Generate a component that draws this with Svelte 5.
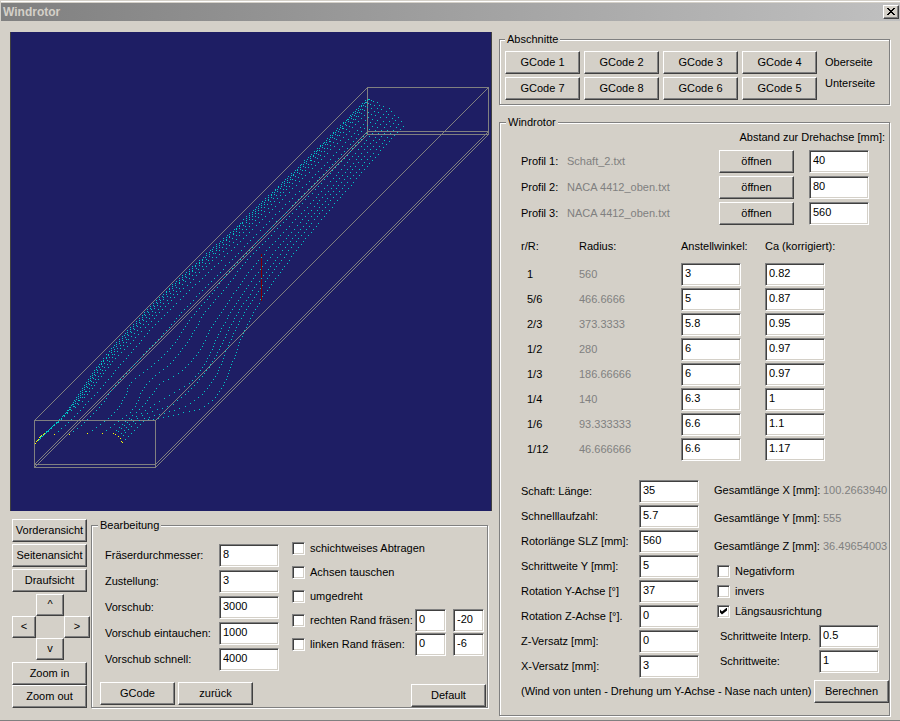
<script lang="ts">
  type Point = [number, number];

  let machining = $state([
    { id: 'fraeser', label: 'Fräserdurchmesser:', value: '8' },
    { id: 'zustellung', label: 'Zustellung:', value: '3' },
    { id: 'vorschub', label: 'Vorschub:', value: '3000' },
    { id: 'eintauchen', label: 'Vorschub eintauchen:', value: '1000' },
    { id: 'schnell', label: 'Vorschub schnell:', value: '4000' }
  ]);

  let options = $state([
    { label: 'schichtweises Abtragen', checked: false, values: [] },
    { label: 'Achsen tauschen', checked: false, values: [] },
    { label: 'umgedreht', checked: false, values: [] },
    { label: 'rechten Rand fräsen:', checked: false, values: ['0', '-20'] },
    { label: 'linken Rand fräsen:', checked: false, values: ['0', '-6'] }
  ]);

  let profiles = $state([
    { file: 'Schaft_2.txt', distance: '40' },
    { file: 'NACA 4412_oben.txt', distance: '80' },
    { file: 'NACA 4412_oben.txt', distance: '560' }
  ]);

  let stations = $state([
    { ratio: '1', radius: '560', angle: '3', ca: '0.82' },
    { ratio: '5/6', radius: '466.6666', angle: '5', ca: '0.87' },
    { ratio: '2/3', radius: '373.3333', angle: '5.8', ca: '0.95' },
    { ratio: '1/2', radius: '280', angle: '6', ca: '0.97' },
    { ratio: '1/3', radius: '186.66666', angle: '6', ca: '0.97' },
    { ratio: '1/4', radius: '140', angle: '6.3', ca: '1' },
    { ratio: '1/6', radius: '93.333333', angle: '6.6', ca: '1.1' },
    { ratio: '1/12', radius: '46.666666', angle: '6.6', ca: '1.17' }
  ]);

  let rotor = $state([
    { id: 'schaft', label: 'Schaft: Länge:', value: '35' },
    { id: 'slz', label: 'Schnelllaufzahl:', value: '5.7' },
    { id: 'laenge', label: 'Rotorlänge SLZ [mm]:', value: '560' },
    { id: 'schritt-y', label: 'Schrittweite Y [mm]:', value: '5' },
    { id: 'rot-y', label: 'Rotation Y-Achse [°]', value: '37' },
    { id: 'rot-z', label: 'Rotation Z-Achse [°].', value: '0' },
    { id: 'z-versatz', label: 'Z-Versatz [mm]:', value: '0' },
    { id: 'x-versatz', label: 'X-Versatz [mm]:', value: '3' }
  ]);

  const totals = [
    { label: 'Gesamtlänge X [mm]:', value: '100.2663940' },
    { label: 'Gesamtlänge Y [mm]:', value: '555' },
    { label: 'Gesamtlänge Z [mm]:', value: '36.49654003' }
  ];

  let flags = $state([
    { label: 'Negativform', checked: false },
    { label: 'invers', checked: false },
    { label: 'Längsausrichtung', checked: true }
  ]);

  let steps = $state([
    { id: 'interp', label: 'Schrittweite Interp.', value: '0.5' },
    { id: 'schrittweite', label: 'Schrittweite:', value: '1' }
  ]);

  const sections = [1, 2, 3, 4, 7, 8, 6, 5];

  // blade surface lines, each from the shaft to the tip
  const leading: Point[] = [[35, 443], [44, 433], [60, 418], [75, 399], [92, 373], [103, 358], [122, 336], [137, 320], [157, 299], [190, 268], [232, 230], [260, 203], [311, 154], [368, 97]];
  const upper: Point[] = [[44, 434], [52, 427], [66, 414], [83, 399], [103, 373], [115, 358], [136, 336], [152, 320], [172, 299], [204, 268], [245, 230], [272, 203], [321, 154], [376, 98]];
  const lines: Point[][] = [
    ...[0, 0.12, 0.25, 0.42, 0.68, 1].map((t) =>
      leading.map((p, i): Point => [p[0] + (upper[i][0] - p[0]) * t, p[1] + (upper[i][1] - p[1]) * t])
    ),
    [[54, 434], [70, 420], [86, 403], [104, 384], [128, 355], [156, 323], [180, 299], [212, 268], [240, 241], [326, 154], [379, 100]],
    [[69, 434], [85, 421], [100, 405], [113, 388], [133, 365], [160, 337], [181, 312], [203, 289], [249, 241], [327, 162], [382, 102]],
    [[87, 433], [100, 424], [115, 411], [125, 395], [130, 383], [150, 367], [172, 345], [189, 320], [209, 296], [230, 270], [257, 241], [328, 168], [385, 104]],
    [[102, 433], [118, 421], [133, 408], [141, 392], [150, 380], [170, 363], [188, 340], [204, 313], [223, 290], [245, 262], [265, 241], [329, 174], [389, 107]],
    [[113, 433], [125, 421], [141, 407], [153, 392], [162, 382], [182, 370], [199, 350], [211, 327], [229, 300], [250, 270], [275, 241], [331, 180], [392, 110]],
    [[115, 434], [128, 421], [145, 410], [160, 400], [178, 389], [194, 378], [208, 357], [219, 332], [233, 308], [254, 277], [283, 241], [334, 184], [395, 114]],
    [[118, 436], [134, 420], [152, 411], [168, 406], [184, 395], [202, 376], [214, 358], [226, 334], [240, 308], [262, 277], [290, 241], [335, 189], [398, 117]],
    [[120, 438], [137, 421], [156, 415], [176, 409], [193, 401], [207, 388], [218, 370], [225, 352], [235, 330], [247, 307], [262, 285], [296, 241], [337, 193], [402, 120]],
    [[122, 442], [125, 439], [143, 421], [152, 419], [162, 417], [177, 414], [189, 411], [200, 408], [211, 401], [220, 390], [226, 378], [232, 362], [240, 340], [250, 318], [262, 297], [280, 272], [303, 241], [340, 197], [378, 153], [405, 123]]
  ];

  const rootDots: Point[] = [[35, 443], [36, 441], [37, 440], [38, 439], [39, 437], [40, 436], [41, 435], [43, 434], [44, 433], [54, 434], [69, 434], [87, 433], [102, 433], [113, 433], [115, 434], [118, 436], [120, 438], [121, 441], [122, 442]];

  function spline(a: number, b: number, c: number, d: number, t: number) {
    return 0.5 * (2 * b + (c - a) * t + (2 * a - 5 * b + 4 * c - d) * t * t + (3 * b - a - 3 * c + d) * t * t * t);
  }

  function dotsAlong(line: Point[]) {
    const dots: Point[] = [];
    let last = line[0];
    for (let i = 0; i < line.length - 1; i++) {
      const before = line[Math.max(0, i - 1)];
      const after = line[Math.min(line.length - 1, i + 2)];
      for (let n = 1; n <= 200; n++) {
        const x = spline(before[0], line[i][0], line[i + 1][0], after[0], n / 200);
        const y = spline(before[1], line[i][1], line[i + 1][1], after[1], n / 200);
        // one dot per 3px step of the longer axis, a wider step where the blade turns
        if (last[1] - y >= 3 || x - last[0] >= 5) {
          last = [x, y];
          dots.push(last);
        }
      }
    }
    return dots;
  }

  function dotPath(dots: Point[]) {
    return dots.map(([x, y]) => `M${Math.round(x)} ${Math.round(y)}h1v1h-1z`).join('');
  }

  const surface = dotPath(lines.flatMap(dotsAlong));
  const root = dotPath(rootDots);
</script>

<main class="window">
  <header class="titlebar">
    <h1>Windrotor</h1>
    <button class="close" aria-label="Schließen">
      <svg viewBox="0 0 8 7" width="8" height="7" shape-rendering="crispEdges">
        <path d="M0 0h2v1h1v1h2v-1h1v-1h2v1h-1v1h-1v1h-1v1h1v1h1v1h1v1h-2v-1h-1v-1h-2v1h-1v1h-2v-1h1v-1h1v-1h1v-1h-1v-1h-1v-1h-1z" />
      </svg>
    </button>
  </header>

  <div class="client">
    <div class="left">
      <svg class="view" viewBox="10 32 481 479" shape-rendering="crispEdges">
        <g class="box">
          <path d="M34.5 420.5h121v47h-121zM34.5 464.5h121M367.5 87.5h121v47h-121zM367.5 131.5h121" />
          <path d="M34.5 420.5l333 -333M155.5 420.5l333 -333M34.5 464.5l333 -333M34.5 467.5l333 -333M155.5 464.5l333 -333M155.5 467.5l333 -333" />
        </g>
        <path class="axis" d="M261.5 254v47" />
        <path class="surface" d={surface} />
        <path class="root" d={root} />
      </svg>

      <div class="tools">
        <div class="views">
          <button>Vorderansicht</button>
          <button>Seitenansicht</button>
          <button>Draufsicht</button>
          <div class="arrows">
            <button class="up">^</button>
            <button class="back">&lt;</button>
            <button class="forward">&gt;</button>
            <button class="down">v</button>
          </div>
          <div class="zoom">
            <button>Zoom in</button>
            <button>Zoom out</button>
          </div>
        </div>

        <fieldset class="machining">
          <legend>Bearbeitung</legend>
          <div class="columns">
            <div class="params">
              {#each machining as item}
                <label for={item.id}>{item.label}</label>
                <input id={item.id} type="text" bind:value={item.value} />
              {/each}
            </div>
            <div class="options">
              {#each options as option}
                <div class="option">
                  <label class="check"><input type="checkbox" bind:checked={option.checked} />{option.label}</label>
                  {#each option.values as _, i}
                    <input type="text" aria-label={`${option.label} ${i + 1}`} bind:value={option.values[i]} />
                  {/each}
                </div>
              {/each}
            </div>
          </div>
          <div class="actions">
            <button>GCode</button>
            <button>zurück</button>
            <button class="default">Default</button>
          </div>
        </fieldset>
      </div>
    </div>

    <div class="right">
      <fieldset class="sections">
        <legend>Abschnitte</legend>
        <div class="section-buttons">
          {#each sections as section}
            <button>GCode {section}</button>
          {/each}
        </div>
        <div class="sides">
          <span>Oberseite</span>
          <span>Unterseite</span>
        </div>
      </fieldset>

      <fieldset class="rotor">
        <legend>Windrotor</legend>
        <p class="distance">Abstand zur Drehachse [mm]:</p>
        <div class="profiles">
          {#each profiles as profile, i}
            <label for={`profil-${i}`}>Profil {i + 1}:</label>
            <span class="muted">{profile.file}</span>
            <button>öffnen</button>
            <input id={`profil-${i}`} type="text" bind:value={profile.distance} />
          {/each}
        </div>

        <table>
          <thead>
            <tr>
              <th class="ratio">r/R:</th>
              <th class="radius">Radius:</th>
              <th class="angle">Anstellwinkel:</th>
              <th>Ca (korrigiert):</th>
            </tr>
          </thead>
          <tbody>
            {#each stations as station}
              <tr>
                <td class="ratio">{station.ratio}</td>
                <td class="muted">{station.radius}</td>
                <td><input type="text" aria-label={`Anstellwinkel ${station.ratio}`} bind:value={station.angle} /></td>
                <td><input type="text" aria-label={`Ca ${station.ratio}`} bind:value={station.ca} /></td>
              </tr>
            {/each}
          </tbody>
        </table>

        <div class="settings">
          <div class="lengths">
            {#each rotor as item}
              <label for={item.id}>{item.label}</label>
              <input id={item.id} type="text" bind:value={item.value} />
            {/each}
          </div>
          <div class="extras">
            <div class="totals">
              {#each totals as total}
                <span>{total.label}</span>
                <span class="muted">{total.value}</span>
              {/each}
            </div>
            <div class="flags">
              {#each flags as flag}
                <label class="check"><input type="checkbox" bind:checked={flag.checked} />{flag.label}</label>
              {/each}
            </div>
            <div class="steps">
              {#each steps as step}
                <label for={step.id}>{step.label}</label>
                <input id={step.id} type="text" bind:value={step.value} />
              {/each}
            </div>
          </div>
        </div>

        <div class="footer">
          <span>(Wind von unten - Drehung um Y-Achse - Nase nach unten)</span>
          <button>Berechnen</button>
        </div>
      </fieldset>
    </div>
  </div>
</main>

<style>
  :global(body) {
    background: #d4d0c8;
  }

  .window {
    box-sizing: border-box;
    min-width: 900px;
    padding-top: 3px;
    border-bottom: 1px solid #808080;
    background: #d4d0c8;
    color: #000;
    font-family: 'Liberation Sans', Arial, sans-serif;
    font-size: 11px;
    line-height: 15px;
  }

  .titlebar {
    display: flex;
    align-items: center;
    justify-content: space-between;
    height: 18px;
    margin-left: 1px;
    padding: 0 1px 0 2px;
    background: linear-gradient(to right, #808080, #c0c0c0);
    box-shadow: 0 -1px #d4d0c8, 0 -2px #fff;
  }

  h1 {
    margin: 0;
    color: #d4d0c8;
    font-size: 12px;
    font-weight: 700;
  }

  button {
    box-sizing: border-box;
    width: 75px;
    height: 23px;
    padding: 0 0 1px;
    border: 1px solid;
    border-color: #fff #404040 #404040 #fff;
    border-radius: 0;
    background: #d4d0c8;
    box-shadow: inset -1px -1px #808080;
    color: #000;
    font: inherit;
    white-space: nowrap;
  }

  .close {
    display: grid;
    place-items: center;
    width: 16px;
    height: 14px;
  }

  input[type='text'] {
    box-sizing: border-box;
    width: 60px;
    height: 23px;
    margin: 0;
    padding: 1px 3px 4px;
    border: 1px solid;
    border-color: #808080 #fff #fff #808080;
    border-radius: 0;
    background: #fff;
    box-shadow: inset 1px 1px #404040, inset -1px -1px #d4d0c8;
    color: #000;
    font: inherit;
    outline: 0;
  }

  input[type='checkbox'] {
    appearance: none;
    flex: none;
    box-sizing: border-box;
    width: 13px;
    height: 13px;
    margin: 0;
    border: 1px solid;
    border-color: #808080 #fff #fff #808080;
    background: #fff;
    box-shadow: inset 1px 1px #404040, inset -1px -1px #d4d0c8;
  }

  input[type='checkbox']:checked::before {
    content: '';
    display: block;
    width: 7px;
    height: 7px;
    margin: 2px;
    background: #000;
    clip-path: polygon(0 28%, 28% 58%, 100% 0, 100% 42%, 28% 100%, 0 72%);
  }

  fieldset {
    min-width: 0;
    margin: 0;
    border: 1px solid #808080;
    box-shadow: inset 1px 1px #fff, 1px 1px #fff;
  }

  legend {
    padding: 0 2px;
    background: #d4d0c8;
  }

  label,
  span {
    white-space: nowrap;
  }

  .muted {
    color: #808080;
  }

  .check {
    display: flex;
    align-items: center;
    gap: 5px;
  }

  .client {
    display: grid;
    grid-template-columns: minmax(0, 1fr) 391px;
    gap: 8px;
    padding: 11px 10px 4px;
  }

  .view {
    display: block;
    width: 100%;
    background: #1e1e64;
    box-shadow: inset 1px 0 #404040, 1px 0 #404040;
  }

  .box {
    fill: none;
    stroke: #808080;
  }

  .axis {
    stroke: #800000;
  }

  .surface {
    fill: #00c8c8;
  }

  .root {
    fill: #ff0;
  }

  .tools {
    display: flex;
    align-items: flex-start;
    gap: 1px;
    padding: 7px 3px 0 2px;
  }

  .views {
    display: flex;
    flex-direction: column;
    gap: 2px;
    width: 78px;
    padding-top: 1px;
  }

  .arrows {
    display: grid;
    grid-template: 22px 22px 22px / 24px 28px 26px;
  }

  .arrows button {
    width: 100%;
    height: 100%;
  }

  .up {
    grid-area: 1 / 2;
  }

  .down {
    grid-area: 3 / 2;
  }

  .back {
    grid-area: 2 / 1;
  }

  .forward {
    grid-area: 2 / 3;
  }

  .zoom {
    display: flex;
    flex-direction: column;
  }

  .machining {
    flex: 1;
    padding: 3px 1px 0 8px;
  }

  .machining legend {
    margin-left: -2px;
  }

  .columns {
    display: flex;
    gap: 13px;
    padding-left: 5px;
  }

  .params {
    display: grid;
    grid-template-columns: 114px 60px;
    row-gap: 3px;
    align-items: center;
    padding-top: 8px;
  }

  .options {
    display: grid;
    grid-auto-rows: 24px;
    align-content: start;
  }

  .option {
    display: grid;
    grid-template-columns: 123px 38px 31px;
    align-items: center;
  }

  .option input[type='text'] {
    width: 31px;
  }

  .actions {
    display: flex;
    gap: 3px;
    height: 25px;
    margin-top: 11px;
  }

  .default {
    align-self: flex-end;
    margin-left: auto;
  }

  .sections {
    display: flex;
    gap: 8px;
    padding: 4px 5px;
  }

  .section-buttons {
    display: grid;
    grid-template-columns: repeat(4, 75px);
    gap: 3px 4px;
  }

  .sides {
    display: flex;
    flex-direction: column;
    gap: 6px;
    padding-top: 4px;
  }

  .rotor {
    margin-top: 10px;
    padding: 0 0 12px 21px;
  }

  .rotor legend {
    margin-left: -15px;
  }

  .distance {
    margin: 0 4px 5px 0;
    text-align: right;
  }

  .profiles {
    display: grid;
    grid-template-columns: 46px 1fr 90px 60px;
    row-gap: 3px;
    align-items: center;
    padding-right: 20px;
  }

  table {
    width: 100%;
    margin-top: 14px;
    border-collapse: collapse;
    table-layout: fixed;
  }

  th {
    height: 23px;
    padding: 0;
    font-weight: 400;
    text-align: left;
    vertical-align: top;
    white-space: nowrap;
  }

  th.ratio {
    width: 58px;
  }

  th.radius {
    width: 102px;
  }

  th.angle {
    width: 84px;
  }

  td {
    height: 25px;
    padding: 0;
  }

  td.ratio {
    padding-left: 6px;
  }

  td input[type='text'] {
    display: block;
  }

  .settings {
    display: flex;
    gap: 15px;
    margin-top: 18px;
  }

  .lengths {
    display: grid;
    grid-template-columns: 118px 60px;
    row-gap: 2px;
    align-items: center;
  }

  .extras {
    flex: 1;
    min-width: 0;
  }

  .totals {
    display: grid;
    grid-template-columns: 109px 60px;
    row-gap: 8px;
    line-height: 20px;
  }

  .flags {
    display: grid;
    grid-auto-rows: 20px;
    margin-top: 5px;
    padding-left: 3px;
  }

  .steps {
    display: grid;
    grid-template-columns: 99px 60px;
    row-gap: 2px;
    align-items: center;
    margin-top: 4px;
    padding-left: 6px;
  }

  .footer {
    display: flex;
    align-items: center;
    justify-content: space-between;
    margin-top: 2px;
  }
</style>
